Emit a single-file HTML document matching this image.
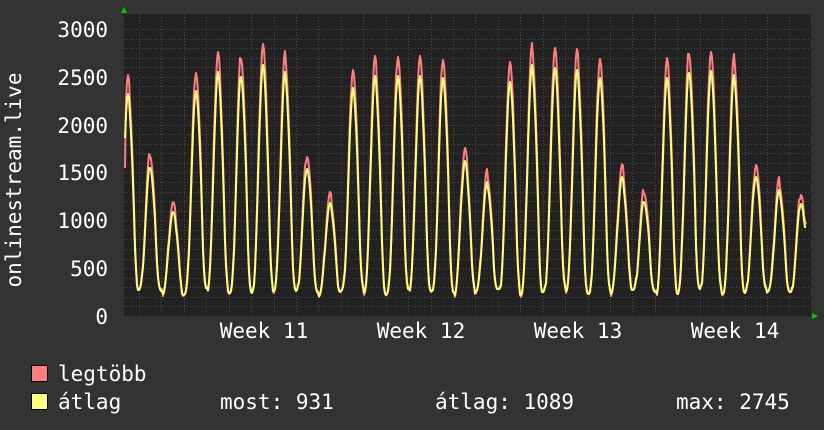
<!DOCTYPE html>
<html><head><meta charset="utf-8"><style>
html,body{margin:0;padding:0;background:#333;}
svg{display:block}
text{font-family:"DejaVu Sans Mono","Liberation Mono",monospace;font-size:21px;fill:#fff}
</style></head><body>
<svg id="s" width="824" height="430" viewBox="0 0 824 430" xmlns="http://www.w3.org/2000/svg">
<rect width="824" height="430" fill="#333"/>
<rect x="124" y="14" width="687" height="302" fill="#222"/>
<g id="grid"></g>
<path id="red" fill="none" stroke="#ff7f7f" stroke-width="2" stroke-linejoin="round"/>
<path id="yel" fill="none" stroke="#ffff7f" stroke-width="2" stroke-linejoin="round"/>
<polygon points="121,13 127,13 124,7" fill="#0c0"/>
<polygon points="812,313 812,319 818,316" fill="#0c0"/>
<g text-anchor="end">
<text x="108" y="37">3000</text>
<text x="108" y="85">2500</text>
<text x="108" y="133">2000</text>
<text x="108" y="180">1500</text>
<text x="108" y="228">1000</text>
<text x="108" y="276">500</text>
<text x="108" y="324">0</text>
</g>
<g text-anchor="middle">
<text x="264" y="338">Week 11</text>
<text x="421" y="338">Week 12</text>
<text x="578" y="338">Week 13</text>
<text x="735" y="338">Week 14</text>
</g>
<text transform="translate(21,180) rotate(-90)" text-anchor="middle">onlinestream.live</text>
<rect x="31.5" y="365.5" width="16" height="16" fill="#ff7f7f" stroke="#000"/>
<rect x="31.5" y="393.5" width="16" height="16" fill="#ffff7f" stroke="#000"/>
<text x="58" y="381">legtöbb</text>
<text x="58" y="409">átlag</text>
<text x="220" y="409">most: 931</text>
<text x="435" y="409">átlag: 1089</text>
<text x="676" y="409">max: 2745</text>
</svg>
<script>
(function(){
var ns="http://www.w3.org/2000/svg",g=document.getElementById("grid");
function ln(x1,y1,x2,y2,c){var l=document.createElementNS(ns,"line");l.setAttribute("x1",x1);l.setAttribute("y1",y1);l.setAttribute("x2",x2);l.setAttribute("y2",y2);l.setAttribute("stroke",c);l.setAttribute("stroke-dasharray","1,2");l.setAttribute("stroke-width","1");g.appendChild(l);}
function Y(v){return 316-v*0.09567;}
for(var v=100;v<=3000;v+=100){var y=Math.round(Y(v))+.5;ln(124,y,811,y,v%500==0?"#6b3a3a":"#4a4a4a");}
for(var i=0;i<32;i++){var x=Math.round(139+i*22.43)+.5;if(x>811)break;var wk=((i-2)%7==0);ln(x,14,x,316,wk?"#6b3a3a":"#4a4a4a");}
var peaks=[[128,2500],[150,1700],[173,1180],[196,2560],[218,2750],[241,2720],[263,2840],[285,2740],[307,1680],[330,1270],[353,2580],[375,2700],[398,2720],[420,2710],[443,2700],[465,1750],[487,1500],[510,2650],[532,2820],[555,2810],[577,2770],[600,2700],[622,1570],[644,1310],[667,2680],[689,2770],[711,2770],[734,2700],[756,1590],[779,1420],[801,1280]];
var r="",yl="";
for(var x=125;x<=806;x+=1){
 var best=null,d=1e9;
 for(var k=0;k<peaks.length;k++){var dd=Math.abs(x-peaks[k][0]);if(dd<d){d=dd;best=peaks[k];}}
 var t=(x-best[0])/22.43;
 var c=(1+Math.cos(2*Math.PI*t))/2;
 var f=Math.pow(c,1.35);
 var mn=250+25*Math.sin(x*0.37);
 var shoulder=(t>0.05&&t<0.32)?0.15*Math.sin((t-0.05)/0.27*Math.PI):0;
 var jr=((x*7919)%13-6)*6;
 var vr=mn+(best[1]-mn)*(f+shoulder*(1-f))+jr;
 if(x<126)vr=1550;
 var vy=mn+(best[1]*0.93-mn)*(f+shoulder*(1-f))-15*f+jr*0.5;
 if(x>803){vy=Math.max(Math.min(vy,1000),930);vr=Math.max(Math.min(vr,1050),960);}
 r+=(r?"L":"M")+x+","+Math.round(Y(vr));
 yl+=(yl?"L":"M")+x+","+Math.round(Y(vy));
}
document.getElementById("red").setAttribute("d",r);
document.getElementById("yel").setAttribute("d",yl);
})();
</script>
</body></html>
